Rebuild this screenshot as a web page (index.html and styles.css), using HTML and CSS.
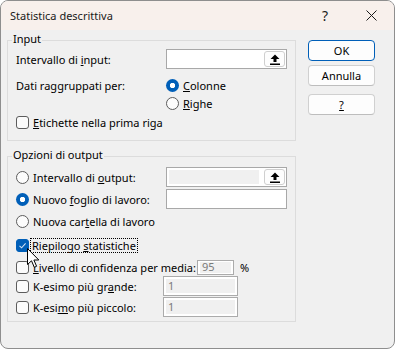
FILE: index.html
```html
<!DOCTYPE html>
<html lang="it">
<head>
<meta charset="utf-8">
<title>Statistica descrittiva</title>
<link rel="stylesheet" href="styles.css">
</head>
<body>
<div class="window">
  <div class="titlebar">
    <span class="title">Statistica descrittiva</span>
    <span class="tb-btn tb-help">?</span>
    <span class="tb-btn tb-close">
      <svg width="11" height="11" viewBox="0 0 11 11"><path d="M0.5 0.5 L10.5 10.5 M10.5 0.5 L0.5 10.5" stroke="#1a1a1a" stroke-width="1" fill="none"/></svg>
    </span>
  </div>
  <div class="content">
    <div class="left">
      <div class="group g-input">
        <span class="legend">Input</span>
        <div class="row r1">
          <span class="lbl"><span>Intervallo di <u>i</u>nput:</span></span>
          <div class="field">
            <span class="pick"><svg width="10" height="11" viewBox="0 0 10 11"><path d="M5 0.5 L9.5 5 L6.5 5 L6.5 8 L3.5 8 L3.5 5 L0.5 5 Z" fill="#000"/><rect x="0" y="9.5" width="10" height="1.5" fill="#000"/></svg></span>
          </div>
        </div>
        <div class="row r2">
          <span class="lbl"><span>Dati raggruppati per:</span></span>
          <span class="opt"><span class="radio on"></span><span><u>C</u>olonne</span></span>
        </div>
        <div class="row r3">
          <span class="lbl"></span>
          <span class="opt"><span class="radio"></span><span><u>R</u>ighe</span></span>
        </div>
        <div class="row r4">
          <span class="check"></span><span><u>E</u>tichette nella prima riga</span>
        </div>
      </div>

      <div class="group g-output">
        <span class="legend">Opzioni di output</span>
        <div class="row o1">
          <span class="lbl"><span class="radio"></span><span>Intervallo di <u>o</u>utput:</span></span>
          <div class="field disabled">
            <span class="fill"></span>
            <span class="pick"><svg width="10" height="11" viewBox="0 0 10 11"><path d="M5 0.5 L9.5 5 L6.5 5 L6.5 8 L3.5 8 L3.5 5 L0.5 5 Z" fill="#000"/><rect x="0" y="9.5" width="10" height="1.5" fill="#000"/></svg></span>
          </div>
        </div>
        <div class="row o2">
          <span class="lbl"><span class="radio on"></span><span>Nuovo <u>f</u>oglio di lavoro:</span></span>
          <div class="field"></div>
        </div>
        <div class="row o3">
          <span class="lbl"><span class="radio"></span><span>Nuova car<u>t</u>ella di lavoro</span></span>
        </div>
        <div class="row o4">
          <span class="check on"><svg width="11" height="11" viewBox="0 0 11 11"><path d="M2.5 5.8 L4.6 7.8 L8.6 3.4" stroke="#cfe0f3" stroke-width="1.1" fill="none"/></svg></span>
          <span class="focus">Riepilogo <u>s</u>tatistiche</span>
        </div>
        <div class="row o5">
          <span class="lbl lbl-wide"><span class="check"></span><span><u>L</u>ivello di confidenza per media:</span></span>
          <span class="dbox small"><span class="dfill">95</span></span>
          <span class="pct">%</span>
        </div>
        <div class="row o6">
          <span class="lbl lbl-k"><span class="check"></span><span>K-esimo più gr<u>a</u>nde:</span></span>
          <span class="dbox"><span class="dfill">1</span></span>
        </div>
        <div class="row o7">
          <span class="lbl lbl-k"><span class="check"></span><span>K-esi<u>m</u>o più piccolo:</span></span>
          <span class="dbox"><span class="dfill">1</span></span>
        </div>
      </div>
    </div>

    <div class="buttons">
      <span class="btn default">OK</span>
      <span class="btn">Annulla</span>
      <span class="btn help"><u>?</u></span>
    </div>
  </div>

  <svg class="cursor" width="13" height="21" viewBox="0 0 13 21">
    <path d="M0.5 0.5 L0.5 16.5 L4.5 12.8 L7.3 19.3 L9.6 18.3 L6.9 12 L11.8 12 Z" fill="#fff" stroke="#000" stroke-width="1" stroke-linejoin="round"/>
  </svg>
</div>
</body>
</html>
```

FILE: styles.css
```css
html, body {
  margin: 0;
  padding: 0;
  background: #ffffff;
}

.window {
  position: relative;
  width: 395px;
  height: 349px;
  box-sizing: border-box;
  border: 1px solid #8e8e8e;
  border-radius: 8px;
  background: #f0f0f0;
  overflow: hidden;
  font-family: "Noto Sans", "Open Sans", sans-serif;
  font-size: 11px;
  line-height: 15px;
  color: #000;
}

u {
  text-decoration: underline;
  text-underline-offset: 1px;
}

/* title bar */
.titlebar {
  height: 29px;
  background: #f8f0ec;
  display: flex;
  align-items: center;
  padding-left: 9px;
}

.title {
  flex: 1;
  font-size: 11px;
  color: #1a1a1a;
}

.tb-btn {
  width: 46px;
  height: 29px;
  display: flex;
  align-items: center;
  justify-content: center;
}

.tb-help {
  font-size: 14px;
  color: #1a1a1a;
}

/* body */
.content {
  display: flex;
  align-items: flex-start;
  padding: 10px 0 0 6px;
}

.left {
  width: 289px;
  flex: none;
}

.group {
  position: relative;
  border: 1px solid #dcdcdc;
  padding: 0 0 0 8px;
}

.g-input {
  padding-bottom: 9px;
}

.g-output {
  margin-top: 15px;
  padding-bottom: 4px;
}

.legend {
  position: absolute;
  left: 4px;
  top: -10px;
  padding: 0 1px;
  background: #f0f0f0;
  line-height: 16px;
}

.row {
  display: flex;
  align-items: center;
}

.lbl {
  width: 150px;
  flex: none;
  display: flex;
  align-items: center;
}

.lbl-wide { width: 181px; }
.lbl-k { width: 147px; }

.r1 { margin-top: 8px; height: 20px; }
.r2 { margin-top: 7px; height: 18px; }
.r3 { height: 18px; }
.r4 { margin-top: 1px; height: 18px; }

.o1 { margin-top: 10px; height: 20px; }
.o2 { margin-top: 2px; height: 20px; }
.o3 { margin-top: 3px; height: 18px; }
.o4 { margin-top: 6px; height: 18px; }
.o5 { margin-top: 4px; height: 18px; }
.o6 { height: 20px; }
.o7 { margin-top: 1px; height: 20px; }

.opt {
  display: flex;
  align-items: center;
}

/* radio */
.radio {
  width: 13px;
  height: 13px;
  box-sizing: border-box;
  border: 1px solid #5c5c5c;
  border-radius: 50%;
  background: #fcfcfc;
  margin-right: 4px;
  flex: none;
}

.radio.on {
  border: none;
  background: radial-gradient(circle at 50% 50%, #ffffff 0 2.4px, #005fb8 3px);
}

/* checkbox */
.check {
  width: 13px;
  height: 13px;
  box-sizing: border-box;
  border: 1px solid #5c5c5c;
  border-radius: 3px;
  background: #fbfbfb;
  margin-right: 4px;
  flex: none;
  display: flex;
  align-items: center;
  justify-content: center;
}

.check.on {
  background: #005fb8;
  border-color: #005fb8;
  margin-right: 2px;
}

.focus {
  outline: 1px dotted #000;
  padding: 0 1px;
  line-height: 13px;
}

/* text fields */
.field {
  width: 121px;
  height: 20px;
  box-sizing: border-box;
  border: 1px solid #a8a8a8;
  background: #fff;
  display: flex;
  align-items: center;
  justify-content: flex-end;
  padding: 1px;
}

.field.disabled {
  padding: 2px 1px 2px 2px;
}

.fill {
  flex: 1;
  align-self: stretch;
  background: #f0f0f0;
  margin-right: 5px;
}

.pick {
  width: 21px;
  height: 16px;
  box-sizing: border-box;
  border: 1px solid #cfcfcf;
  border-radius: 3px;
  background: #fdfdfd;
  display: flex;
  align-items: center;
  justify-content: center;
}

.dbox {
  width: 75px;
  height: 20px;
  box-sizing: border-box;
  border: 1px solid #ababab;
  background: #fff;
  padding: 2px;
  display: flex;
}

.dbox.small {
  width: 37px;
  height: 15px;
  padding: 1px 2px;
}

.dfill {
  flex: 1;
  background: #f0f0f0;
  color: #7a7a7a;
  padding-left: 2px;
  line-height: 14px;
  display: flex;
  align-items: center;
}

.pct {
  margin-left: 6px;
}

/* buttons */
.buttons {
  margin-left: 12px;
  width: 67px;
  display: flex;
  flex-direction: column;
}

.btn {
  height: 21px;
  box-sizing: border-box;
  border: 1px solid #d0d0d0;
  border-bottom-color: #bdbdbd;
  border-radius: 4px;
  background: #fdfdfd;
  display: flex;
  align-items: center;
  justify-content: center;
  margin-bottom: 4px;
}

.btn.default {
  border-color: #005fb8;
}

.btn.help {
  margin-top: 4px;
}

/* mouse pointer overlay */
.cursor {
  position: absolute;
  left: 26px;
  top: 247px;
}
```
